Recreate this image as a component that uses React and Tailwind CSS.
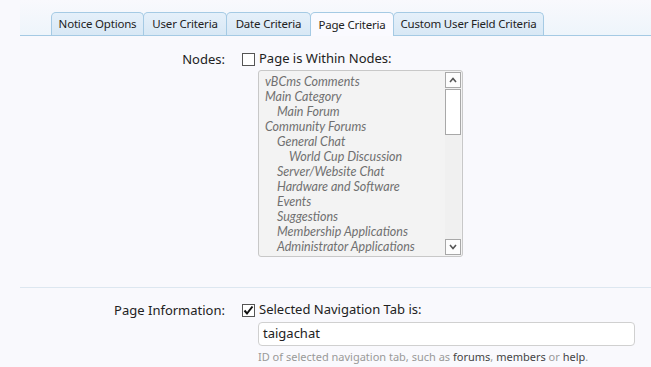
import React from 'react';

const tabs = [
  ['Notice Options', 'w-[93px]'],
  ['User Criteria', 'w-[84px]'],
  ['Date Criteria', 'w-[85px]'],
  ['Page Criteria', 'w-[84px]'],
  ['Custom User Field Criteria', 'w-[151px]'],
];

const nodes = [
  ['vBCms Comments', 0],
  ['Main Category', 0],
  ['Main Forum', 1],
  ['Community Forums', 0],
  ['General Chat', 1],
  ['World Cup Discussion', 2],
  ['Server/Website Chat', 1],
  ['Hardware and Software', 1],
  ['Events', 1],
  ['Suggestions', 1],
  ['Membership Applications', 1],
  ['Administrator Applications', 1],
];

const indent = ['pl-[5px]', 'pl-[17px]', 'pl-[29px]'];

const Checkbox = ({ checked }) => (
  <span className="w-[13px] h-[13px] border border-[#555] bg-white flex items-center justify-center shrink-0">
    {checked && (
      <svg width="11" height="11" viewBox="0 0 11 11">
        <path d="M1.5 5.5 L4 8.5 L9.5 1.5" fill="none" stroke="#111" strokeWidth="2" />
      </svg>
    )}
  </span>
);

export default function App() {
  return (
    <div className="min-h-[367px] bg-[#f9f9fd] text-[#222] pl-[20px]" style={{ fontFamily: '"Trebuchet MS", "Noto Sans", sans-serif' }}>
      {/* tabs */}
      <div className="flex items-end pl-[31px] pt-[12px] h-[36px] border-b border-[#a5cae4] bg-gradient-to-b from-[#f9f9fd] to-[#eef5fb]">
        {tabs.map(([t, w]) => {
          const active = t === 'Page Criteria';
          return (
            <div
              key={t}
              className={
                w +
                (active
                  ? ' h-[24px] -mb-px flex items-center justify-center text-[11.5px] tracking-[-0.2px] text-[#222] bg-[#fafaff] border border-b-0 border-[#a5cae4] rounded-t-[5px] -ml-px whitespace-nowrap'
                  : ' h-[23px] flex items-center justify-center text-[11.5px] tracking-[-0.2px] text-[#222] bg-gradient-to-b from-[#e5f0fa] to-[#d8e8f5] border border-b-0 border-[#a5cae4] rounded-t-[5px] -ml-px first:ml-0 whitespace-nowrap')
              }
            >
              {t}
            </div>
          );
        })}
      </div>

      {/* nodes row */}
      <div className="flex pt-[14px] pb-[30px]">
        <div className="w-[205px] text-right text-[13px] leading-[18px]">Nodes:</div>
        <div className="ml-[17px]">
          <div className="flex items-center gap-[4px] h-[18px]">
            <Checkbox />
            <span className="text-[13px]">Page is Within Nodes:</span>
          </div>
          <div className="ml-[16px] mt-[2px] w-[205px] h-[187px] border border-[#c8c8c8] rounded-[3px] bg-[#f3f3f3] flex p-[1px]">
            <div className="flex-1 pt-[2px] italic text-[12.5px] leading-[15px] text-[#707070]" style={{ fontFamily: 'Lato, "Open Sans", sans-serif' }}>
              {nodes.map(([n, l]) => (
                <div key={n} className={indent[l] + ' whitespace-nowrap'}>{n}</div>
              ))}
            </div>
            <div className="w-[16px] flex flex-col bg-[#f0f0f0]">
              <div className="h-[16px] border border-[#a8a8a8] bg-[#fdfdfd] flex items-center justify-center">
                <svg width="8" height="6" viewBox="0 0 8 6"><path d="M1 5 L4 1.5 L7 5" fill="none" stroke="#555" strokeWidth="1.6" /></svg>
              </div>
              <div className="h-[46px] mt-px border border-[#a8a8a8] bg-white" />
              <div className="flex-1" />
              <div className="h-[16px] border border-[#a8a8a8] bg-[#fdfdfd] flex items-center justify-center">
                <svg width="8" height="6" viewBox="0 0 8 6"><path d="M1 1 L4 4.5 L7 1" fill="none" stroke="#555" strokeWidth="1.6" /></svg>
              </div>
            </div>
          </div>
        </div>
      </div>

      <div className="border-t border-[#dde7f0]" />

      {/* page information row */}
      <div className="flex pt-[13px]">
        <div className="w-[205px] text-right text-[13px] leading-[18px]">Page Information:</div>
        <div className="ml-[17px]">
          <div className="flex items-center gap-[4px] h-[18px]">
            <Checkbox checked />
            <span className="text-[13px]">Selected Navigation Tab is:</span>
          </div>
          <div className="ml-[16px] mt-[3px] w-[377px] h-[24px] border border-[#d0d0d0] rounded-[4px] bg-white px-[4px] flex items-center text-[13px]">
            taigachat
          </div>
          <div className="ml-[16px] mt-[3px] text-[11px] text-[#999]">
            ID of selected navigation tab, such as <span className="text-[#444]">forums</span>, <span className="text-[#444]">members</span> or <span className="text-[#444]">help</span>.
          </div>
        </div>
      </div>
    </div>
  );
}
